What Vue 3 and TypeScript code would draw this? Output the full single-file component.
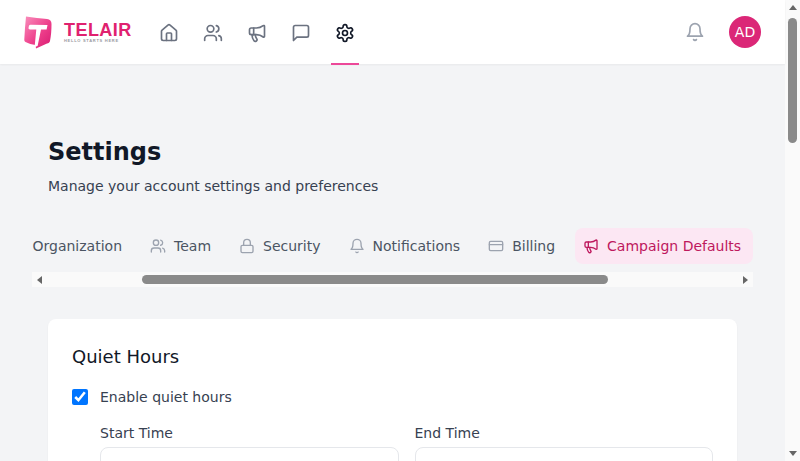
<script setup lang="ts">
interface Tab { label: string; icon: string; active?: boolean }

const tabs: Tab[] = [
  { label: 'Organization', icon: 'building' },
  { label: 'Team', icon: 'users' },
  { label: 'Security', icon: 'lock' },
  { label: 'Notifications', icon: 'bell' },
  { label: 'Billing', icon: 'card' },
  { label: 'Campaign Defaults', icon: 'megaphone', active: true }
]

const navItems = ['home', 'users', 'megaphone', 'chat', 'settings']
</script>

<template>
  <div class="shell">
    <div class="page">
      <svg width="0" height="0" class="defs" aria-hidden="true">
        <defs>
          <symbol id="i-home" viewBox="0 0 24 24">
            <path d="M15 21v-8a1 1 0 0 0-1-1h-4a1 1 0 0 0-1 1v8" />
            <path d="M3 10a2 2 0 0 1 .709-1.528l7-5.999a2 2 0 0 1 2.582 0l7 5.999A2 2 0 0 1 21 10v9a2 2 0 0 1-2 2H5a2 2 0 0 1-2-2z" />
          </symbol>
          <symbol id="i-users" viewBox="0 0 24 24">
            <path d="M16 21v-2a4 4 0 0 0-4-4H6a4 4 0 0 0-4 4v2" />
            <circle cx="9" cy="7" r="4" />
            <path d="M22 21v-2a4 4 0 0 0-3-3.87" />
            <path d="M16 3.13a4 4 0 0 1 0 7.75" />
          </symbol>
          <symbol id="i-megaphone" viewBox="0 0 24 24">
            <path d="M11 6a13 13 0 0 0 8.4-2.8A1 1 0 0 1 21 4v12a1 1 0 0 1-1.6.8A13 13 0 0 0 11 14H5a2 2 0 0 1-2-2V8a2 2 0 0 1 2-2z" />
            <path d="M6 14a12 12 0 0 0 2.4 7.2 2 2 0 0 0 3.2-2.4A8 8 0 0 1 10 14" />
            <path d="M8 6v8" />
          </symbol>
          <symbol id="i-chat" viewBox="0 0 24 24">
            <path d="M21 15a2 2 0 0 1-2 2H7l-4 4V5a2 2 0 0 1 2-2h14a2 2 0 0 1 2 2z" />
          </symbol>
          <symbol id="i-settings" viewBox="0 0 24 24">
            <path d="M12.22 2h-.44a2 2 0 0 0-2 2v.18a2 2 0 0 1-1 1.73l-.43.25a2 2 0 0 1-2 0l-.15-.08a2 2 0 0 0-2.73.73l-.22.38a2 2 0 0 0 .73 2.73l.15.1a2 2 0 0 1 1 1.72v.51a2 2 0 0 1-1 1.74l-.15.09a2 2 0 0 0-.73 2.73l.22.38a2 2 0 0 0 2.73.73l.15-.08a2 2 0 0 1 2 0l.43.25a2 2 0 0 1 1 1.73V20a2 2 0 0 0 2 2h.44a2 2 0 0 0 2-2v-.18a2 2 0 0 1 1-1.73l.43-.25a2 2 0 0 1 2 0l.15.08a2 2 0 0 0 2.73-.73l.22-.39a2 2 0 0 0-.73-2.73l-.15-.08a2 2 0 0 1-1-1.74v-.5a2 2 0 0 1 1-1.74l.15-.09a2 2 0 0 0 .73-2.73l-.22-.38a2 2 0 0 0-2.73-.73l-.15.08a2 2 0 0 1-2 0l-.43-.25a2 2 0 0 1-1-1.73V4a2 2 0 0 0-2-2z" />
            <circle cx="12" cy="12" r="3" />
          </symbol>
          <symbol id="i-bell" viewBox="0 0 24 24">
            <path d="M6 8a6 6 0 0 1 12 0c0 7 3 9 3 9H3s3-2 3-9" />
            <path d="M10.3 21a1.94 1.94 0 0 0 3.4 0" />
          </symbol>
          <symbol id="i-lock" viewBox="0 0 24 24">
            <rect x="3" y="11" width="18" height="11" rx="2" />
            <path d="M7 11V7a5 5 0 0 1 10 0v4" />
          </symbol>
          <symbol id="i-card" viewBox="0 0 24 24">
            <rect x="2" y="5" width="20" height="14" rx="2" />
            <line x1="2" y1="10" x2="22" y2="10" />
          </symbol>
          <symbol id="i-building" viewBox="0 0 24 24">
            <rect x="4" y="2" width="16" height="20" rx="2" />
            <path d="M9 22v-4h6v4M8 6h.01M16 6h.01M12 6h.01M12 10h.01M8 10h.01M16 10h.01" />
          </symbol>
          <linearGradient id="logo-fill" x1="0" y1="0" x2="1" y2="1">
            <stop offset="0" stop-color="#f98fbc" />
            <stop offset="0.55" stop-color="#ee3f8b" />
            <stop offset="1" stop-color="#d81b72" />
          </linearGradient>
        </defs>
      </svg>

      <header class="topbar">
        <div class="brand">
          <svg class="mark" width="28" height="33" viewBox="0 0 28 33">
            <path fill="url(#logo-fill)" d="M2 0.5C9 1.5 17 2.5 23 3C26 3.3 27.5 5 27.5 8C27.5 14 27 20 26 25C25.6 26.6 24.6 27.2 23 27.6L12 32.5L11.5 29C8 28.6 4.5 27.5 1.5 26C0.6 25.5 0.2 24.6 0.3 23.6C0.7 16 1.2 8 2 0.5Z" />
            <path fill="#fff" d="M5 9.5C5.5 9 6 8.8 7 8.8L23.5 9L22.6 13.5L17 13.4L13.6 30L10.6 31L12.3 13.4L6 13.4C5 13.4 4.6 13 4.5 12Z" />
          </svg>
          <div class="wordmark">
            <span class="brand-name">TELAIR</span>
            <span class="brand-tag">HELLO STARTS HERE</span>
          </div>
        </div>

        <nav class="nav">
          <a
            v-for="item in navItems"
            :key="item"
            class="nav-item"
            :class="{ current: item === 'settings' }"
          >
            <svg class="ico" width="20" height="20"><use :href="`#i-${item}`" /></svg>
          </a>
        </nav>

        <div class="top-right">
          <svg class="ico bell" width="20" height="20"><use href="#i-bell" /></svg>
          <div class="avatar">AD</div>
        </div>
      </header>

      <main class="content">
        <h1 class="title">Settings</h1>
        <p class="subtitle">Manage your account settings and preferences</p>

        <div class="tabs-wrap">
          <div class="tabs">
            <div class="tabs-row">
              <button
                v-for="tab in tabs"
                :key="tab.label"
                class="tab"
                :class="{ active: tab.active }"
                type="button"
              >
                <svg class="ico tab-ico" width="16" height="16"><use :href="`#i-${tab.icon}`" /></svg>
                <span>{{ tab.label }}</span>
              </button>
            </div>
          </div>
          <div class="hbar" aria-hidden="true">
            <span class="arrow arrow-left"></span>
            <div class="hbar-track"><div class="hbar-thumb"></div></div>
            <span class="arrow arrow-right"></span>
          </div>
        </div>

        <section class="card">
          <h2 class="card-title">Quiet Hours</h2>
          <label class="check-row">
            <input type="checkbox" checked class="check" />
            <span>Enable quiet hours</span>
          </label>
          <div class="times">
            <label class="field">
              <span class="field-label">Start Time</span>
              <input type="text" class="input" />
            </label>
            <label class="field">
              <span class="field-label">End Time</span>
              <input type="text" class="input" />
            </label>
          </div>
        </section>
      </main>
    </div>

    <div class="vbar" aria-hidden="true">
      <span class="arrow arrow-up"></span>
      <div class="vbar-track"><div class="vbar-thumb"></div></div>
      <span class="arrow arrow-down"></span>
    </div>
  </div>
</template>

<style scoped>
.shell {
  display: flex;
  height: 461px;
  overflow: hidden;
}
.page {
  flex: 1;
  min-width: 0;
  background: #f3f4f6;
  font-family: "DejaVu Sans", sans-serif;
  color: #111827;
}
.defs {
  position: absolute;
}
.ico {
  fill: none;
  stroke: currentColor;
  stroke-width: 2;
  stroke-linecap: round;
  stroke-linejoin: round;
  display: block;
  flex: none;
}
.topbar {
  height: 64px;
  box-sizing: border-box;
  background: #fff;
  box-shadow: 0 1px 2px rgba(0, 0, 0, 0.05);
  display: flex;
  align-items: center;
  padding: 0 24px;
  position: relative;
}
.brand {
  display: flex;
  align-items: center;
  gap: 12px;
  width: 107px;
  flex: none;
}
.mark {
  flex: none;
}
.wordmark {
  display: flex;
  flex-direction: column;
  align-items: flex-start;
  font-family: "Liberation Sans", sans-serif;
  margin-top: 2px;
}
.brand-name {
  font-size: 18px;
  line-height: 15px;
  font-weight: 700;
  letter-spacing: 0.45px;
  color: #e0216f;
}
.brand-tag {
  font-size: 4px;
  line-height: 5px;
  letter-spacing: 0.72px;
  font-weight: 700;
  color: #9a9a9f;
  white-space: nowrap;
}
.nav {
  display: flex;
  gap: 16px;
  margin-left: 24px;
  height: 100%;
  align-items: center;
}
.nav-item {
  width: 28px;
  height: 100%;
  display: flex;
  align-items: center;
  justify-content: center;
  color: #6b7280;
  position: relative;
  padding-top: 2px;
  box-sizing: border-box;
}
.nav-item.current {
  color: #111827;
}
.nav-item.current::after {
  content: "";
  position: absolute;
  left: 0;
  right: 0;
  bottom: -1px;
  height: 2px;
  background: #ec4899;
}
.top-right {
  margin-left: auto;
  display: flex;
  align-items: center;
  gap: 24px;
}
.bell {
  color: #9ca3af;
}
.avatar {
  width: 32px;
  height: 32px;
  border-radius: 50%;
  background: #db2777;
  color: #fff;
  font-size: 14px;
  display: flex;
  align-items: center;
  justify-content: center;
}
.content {
  padding: 72px 48px 48px;
}
.title {
  margin: 0;
  font-size: 24px;
  line-height: 32px;
  font-weight: 700;
  color: #111827;
}
.subtitle {
  margin: 8px 0 0;
  font-size: 14px;
  line-height: 20px;
  color: #374151;
}
.tabs-wrap {
  margin: 32px -16px 0;
}
.tabs {
  overflow: hidden;
  padding-bottom: 8px;
}
.tabs-row {
  display: flex;
  gap: 8px;
  margin-left: -31.5px;
}
.tab {
  flex: none;
  display: flex;
  align-items: center;
  gap: 8px;
  height: 36px;
  padding: 0 12px 0 8px;
  border: 0;
  border-radius: 8px;
  background: transparent;
  font: inherit;
  font-size: 14px;
  line-height: 20px;
  color: #4b5563;
  white-space: nowrap;
}
.tab-ico {
  color: #9ca3af;
}
.tab.active {
  background: #fce7f3;
  color: #be185d;
}
.tab.active .tab-ico {
  color: #be185d;
}
.hbar {
  height: 15px;
  background: #fafafa;
  display: flex;
  align-items: center;
}
.hbar-track {
  flex: 1;
  height: 100%;
  display: flex;
  align-items: center;
  padding-left: 95px;
}
.hbar-thumb {
  width: 466px;
  height: 9px;
  border-radius: 5px;
  background: #8a8a8a;
}
.vbar {
  flex: none;
  width: 15px;
  height: 100%;
  background: #fafafa;
  display: flex;
  flex-direction: column;
  align-items: center;
}
.vbar-track {
  flex: 1;
  width: 100%;
  display: flex;
  justify-content: center;
  padding-top: 3px;
}
.vbar-thumb {
  width: 9px;
  height: 125px;
  border-radius: 5px;
  background: #8a8a8a;
}
.arrow {
  flex: none;
  width: 15px;
  height: 15px;
  display: flex;
  align-items: center;
  justify-content: center;
}
.arrow::before {
  content: "";
  width: 0;
  height: 0;
  border-style: solid;
  border-color: transparent;
}
.arrow-left::before {
  border-width: 4px 5px 4px 0;
  border-right-color: #666;
}
.arrow-right::before {
  border-width: 4px 0 4px 5px;
  border-left-color: #666;
}
.arrow-up::before {
  border-width: 0 4px 5px;
  border-bottom-color: #666;
}
.arrow-down::before {
  border-width: 5px 4px 0;
  border-top-color: #666;
}
.card {
  margin-top: 32px;
  background: #fff;
  border-radius: 8px;
  box-shadow: 0 1px 2px rgba(0, 0, 0, 0.05);
  padding: 24px;
  min-height: 400px;
  box-sizing: border-box;
}
.card-title {
  margin: 0 0 16px;
  font-size: 18px;
  line-height: 28px;
  font-weight: 500;
  color: #111827;
}
.check-row {
  display: flex;
  align-items: center;
  gap: 12px;
  height: 20px;
  font-size: 14px;
  line-height: 20px;
  color: #374151;
}
.check {
  width: 16px;
  height: 16px;
  margin: 0;
}
.times {
  margin-top: 16px;
  padding-left: 28px;
  display: grid;
  grid-template-columns: 1fr 1fr;
  gap: 16px;
}
.field {
  display: flex;
  flex-direction: column;
  gap: 4px;
  min-width: 0;
}
.field-label {
  font-size: 14px;
  line-height: 20px;
  color: #374151;
}
.input {
  height: 42px;
  box-sizing: border-box;
  width: 100%;
  border: 1px solid #e5e7eb;
  border-radius: 8px;
  background: #fff;
  padding: 8px 12px;
}
</style>
